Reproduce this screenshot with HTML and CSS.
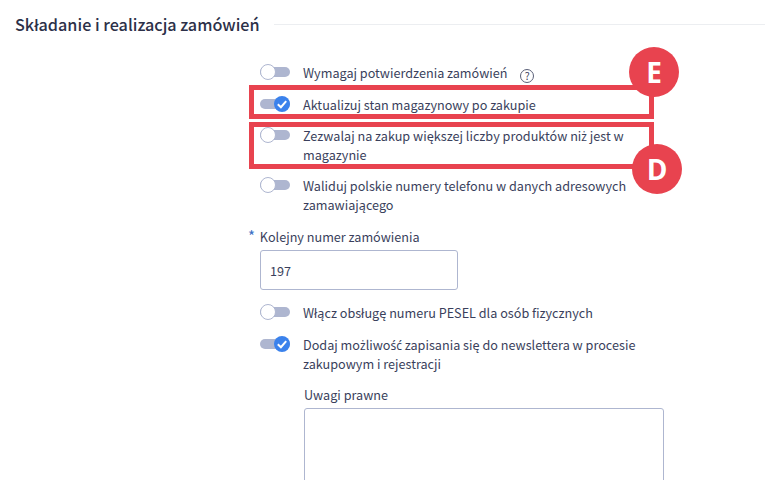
FILE: index.html
```html
<!DOCTYPE html>
<html lang="pl">

<head>
    <meta charset="UTF-8">
    <meta name="viewport" content="width=device-width, initial-scale=1.0">
    <title>Składanie i realizacja zamówień</title>
    <link rel="stylesheet" href="styles.css">
</head>

<body>
    <div class="page">
        <div class="heading">
            <h2>Składanie i realizacja zamówień</h2>
            <div class="rule"></div>
        </div>

        <div class="form">
            <div class="row">
                <span class="toggle"><span class="knob"></span></span>
                <span class="text">Wymagaj potwierdzenia zamówień <span class="help">?</span></span>
            </div>
            <div class="row">
                <span class="toggle on"><span class="knob"><svg viewBox="0 0 16 16" width="16" height="16"><path d="M3.8 8.3 6.9 11.2 12.2 5.2" fill="none" stroke="#fff" stroke-width="2"/></svg></span></span>
                <span class="text">Aktualizuj stan magazynowy po zakupie</span>
            </div>
            <div class="row">
                <span class="toggle"><span class="knob"></span></span>
                <span class="text">Zezwalaj na zakup większej liczby produktów ni<span class="pl">ż</span> jest w magazynie</span>
            </div>
            <div class="row">
                <span class="toggle"><span class="knob"></span></span>
                <span class="text">Waliduj polskie numery telefonu w danych adresowych zamawiającego</span>
            </div>

            <div class="field">
                <label class="label-req"><span class="star">*</span> Kolejny numer zamówienia</label>
                <input class="input" type="text" value="197">
            </div>

            <div class="row">
                <span class="toggle"><span class="knob"></span></span>
                <span class="text">Włącz obsługę numeru PESEL dla osób fizycznych</span>
            </div>
            <div class="row row-news">
                <span class="toggle on"><span class="knob"><svg viewBox="0 0 16 16" width="16" height="16"><path d="M3.8 8.3 6.9 11.2 12.2 5.2" fill="none" stroke="#fff" stroke-width="2"/></svg></span></span>
                <span class="text">Dodaj mo<span class="pl">ż</span>liwo<span class="pl">ść</span> zapisania się do newslettera w procesie zakupowym i rejestracji</span>
            </div>

            <div class="notes">
                <label>Uwagi prawne</label>
                <div class="textarea"></div>
            </div>
        </div>

        <!-- oznaczenia na screenie -->
        <div class="mark box-e"></div>
        <div class="mark box-d"></div>
        <div class="badge badge-e">E</div>
        <div class="badge badge-d">D</div>
    </div>
</body>

</html>
```

FILE: styles.css
```css
html, body {
    margin: 0;
    height: 100%;
    overflow: hidden;
    background: #fff;
}
body {
    font-family: "Noto Sans CJK SC", "Noto Sans", sans-serif;
    font-size: 12.65px;
    line-height: 19px;
    color: #3a3f5c;
}
.page {
    position: relative;
    width: 765px;
    height: 480px;
    overflow: hidden;
}
.heading {
    display: flex;
    align-items: center;
    gap: 14px;
    padding: 12px 0 0 15px;
}
.heading h2 {
    margin: 0;
    font-size: 16.2px;
    line-height: 24px;
    font-weight: 500;
    color: #2c3048;
    white-space: nowrap;
}
.rule {
    flex: 1;
    height: 1px;
    background: #eceef1;
}
.form {
    display: flex;
    flex-direction: column;
    gap: 12px;
    width: 404px;
    margin: 28px 0 0 260px;
}
.row {
    display: flex;
    gap: 13px;
}
.row-news {
    margin-top: 1px;
}
.text {
    flex: 1;
    margin: -1px 0 1px;
}
/* te litery w foncie CJK rozjeżdżają się ze znakiem diakrytycznym */
.pl {
    font-family: "Noto Sans", sans-serif;
    font-size: 12px;
    line-height: 1;
}
.toggle {
    position: relative;
    display: flex;
    flex: none;
    width: 30px;
    height: 16px;
}
.toggle::before {
    content: "";
    position: absolute;
    left: 0;
    right: 0;
    top: 3px;
    height: 10px;
    border-radius: 5px;
    background: #aeb6d0;
}
.knob {
    position: relative;
    box-sizing: border-box;
    width: 16px;
    height: 16px;
    border: 1px solid #aeb6d0;
    border-radius: 50%;
    background: #fff;
}
.toggle.on {
    justify-content: flex-end;
}
.toggle.on .knob {
    border: 0;
    background: #3b82ec;
}
.knob svg {
    display: block;
}
.help {
    display: inline-block;
    box-sizing: border-box;
    width: 14px;
    height: 14px;
    margin-left: 10px;
    border: 1.5px solid #5a6078;
    border-radius: 50%;
    font-size: 10.5px;
    line-height: 11px;
    text-align: center;
    vertical-align: -2px;
}
.field {
    display: flex;
    flex-direction: column;
    margin: 1px 0 2px;
}
.label-req {
    margin: -1px 0 0 -12px;
}
.star {
    margin-right: 2px;
    font-size: 15px;
    line-height: 1;
    color: #3b6fc4;
}
.input {
    box-sizing: border-box;
    width: 198px;
    height: 40px;
    margin-top: 4px;
    padding: 0 9px;
    border: 1px solid #aeb6d0;
    border-radius: 3px;
    font: inherit;
    color: #3a3f5c;
}
.notes {
    display: flex;
    flex-direction: column;
    gap: 4px;
    margin-left: 44px;
}
.notes label {
    margin-top: -1px;
}
.textarea {
    box-sizing: border-box;
    width: 360px;
    height: 120px;
    border: 1px solid #aeb6d0;
    border-radius: 3px;
}
.mark {
    position: absolute;
    box-sizing: border-box;
    border: 5px solid #e8434f;
}
.box-e {
    left: 249px;
    top: 85px;
    width: 405px;
    height: 34px;
}
.box-d {
    left: 249px;
    top: 122px;
    width: 405px;
    height: 47px;
}
.badge {
    position: absolute;
    width: 50px;
    height: 50px;
    border-radius: 50%;
    background: #e8434f;
    color: #fff;
    font-family: "Open Sans", sans-serif;
    font-size: 28px;
    font-weight: 700;
    line-height: 50px;
    text-align: center;
}
.badge-e {
    left: 629px;
    top: 47px;
}
.badge-d {
    left: 632px;
    top: 144px;
}
```
